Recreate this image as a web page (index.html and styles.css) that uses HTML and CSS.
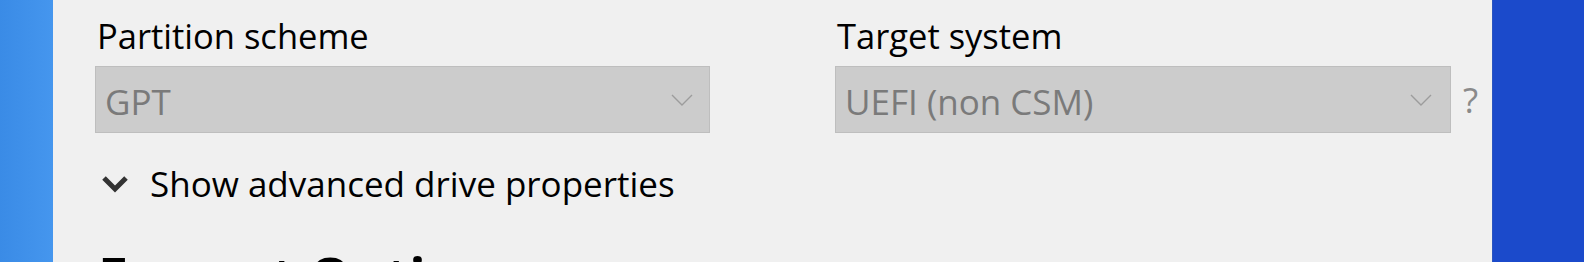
FILE: index.html
```html
<!DOCTYPE html>
<html>
<head>
<meta charset="utf-8">
<link rel="stylesheet" href="styles.css">
</head>
<body>
<div class="desk-left"></div>
<div class="dialog">
  <div class="row">
    <div class="field field-a">
      <div class="label">Partition scheme</div>
      <div class="combo">
        <span class="combo-text">GPT</span>
        <svg class="combo-arrow" width="22" height="12" viewBox="0 0 22 12"><polyline points="1,1 11,11 21,1" fill="none" stroke="#9c9c9c" stroke-width="1.4"/></svg>
      </div>
    </div>
    <div class="field field-b">
      <div class="label">Target system</div>
      <div class="combo-line">
        <div class="combo">
          <span class="combo-text">UEFI (non CSM)</span>
          <svg class="combo-arrow" width="22" height="12" viewBox="0 0 22 12"><polyline points="1,1 11,11 21,1" fill="none" stroke="#9c9c9c" stroke-width="1.4"/></svg>
        </div>
        <span class="help">?</span>
      </div>
    </div>
  </div>
  <div class="toggle">
    <svg class="toggle-icon" width="28" height="18" viewBox="0 0 28 18"><polyline points="3,3 14,14 25,3" fill="none" stroke="#333333" stroke-width="5"/></svg>
    <span class="toggle-text">Show advanced drive properties</span>
  </div>
  <div class="heading">Format Options</div>
</div>
<div class="desk-right"></div>
</body>
</html>
```
FILE: styles.css
```css
html, body {
  margin: 0;
  padding: 0;
}
body {
  width: 1584px;
  height: 262px;
  overflow: hidden;
  display: flex;
  font-family: "Open Sans", "Noto Sans", sans-serif;
}
.desk-left {
  width: 53px;
  flex: none;
  background: linear-gradient(to right, #3a8be6, #4596ee);
}
.desk-right {
  flex: 1;
  background: #1b4acb;
  border-left: 1px solid #2a55c0;
}
.dialog {
  width: 1439px;
  flex: none;
  background: #f0f0f0;
  box-sizing: border-box;
  padding-left: 42px;
  display: flex;
  flex-direction: column;
}
.row {
  display: flex;
  gap: 125px;
  padding-top: 18px;
}
.field-a {
  width: 615px;
}
.label {
  font-size: 34.5px;
  line-height: 36px;
  color: #000;
  padding-left: 2px;
}
.combo {
  margin-top: 12px;
  height: 67px;
  box-sizing: border-box;
  border: 1px solid #bebebe;
  background: #cccccc;
  display: flex;
  align-items: center;
  justify-content: space-between;
  padding: 4px 16px 0 9px;
  width: 615px;
}
.combo-text {
  font-size: 35px;
  color: #7a7a7a;
}
.combo-arrow {
  display: block;
  margin-top: -4px;
}
.combo-line {
  display: flex;
  align-items: flex-end;
  gap: 12px;
}
.combo-line .combo {
  width: 616px;
  padding-right: 18px;
}
.help {
  font-size: 35px;
  color: #8a8a8a;
  line-height: 36px;
  padding-bottom: 15px;
}
.toggle {
  display: flex;
  align-items: center;
  margin-top: 33px;
  height: 36px;
}
.toggle-icon {
  margin-left: 6px;
  margin-right: 21px;
  display: block;
}
.toggle-text {
  font-size: 35px;
  line-height: 36px;
  color: #000;
}
.heading {
  margin-top: 47px;
  padding-left: 3px;
  font-size: 54px;
  line-height: 54px;
  font-weight: 700;
  color: #000;
  white-space: nowrap;
}
```
